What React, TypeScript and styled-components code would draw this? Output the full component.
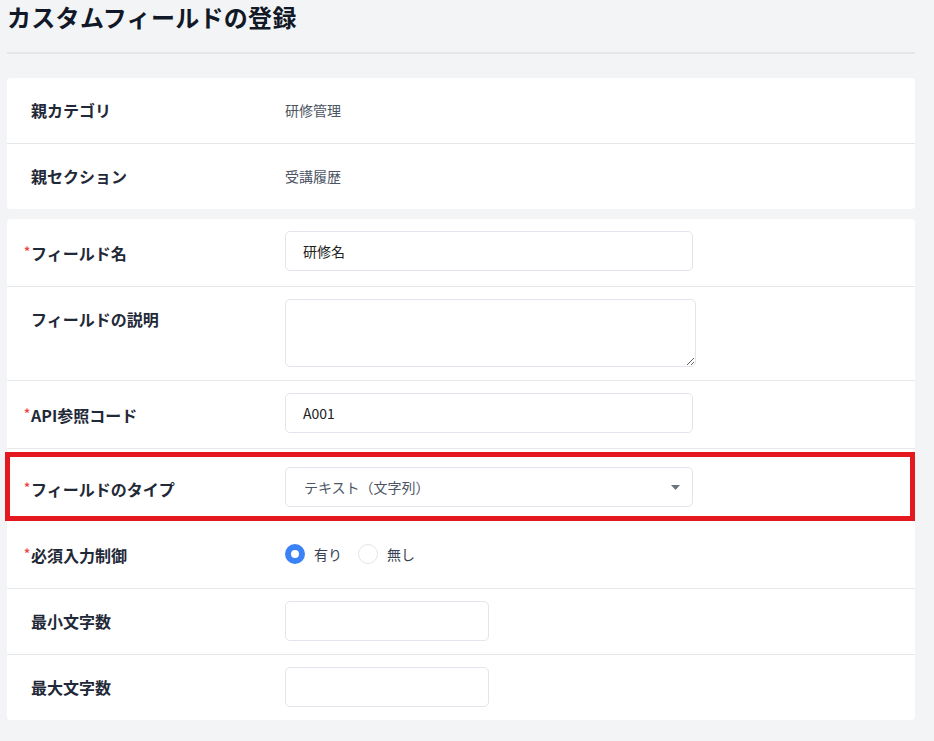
import React from "react"
import styled, { createGlobalStyle } from "styled-components"

const GlobalStyle = createGlobalStyle`
  html, body {
    margin: 0;
    padding: 0;
    background: #f3f4f6;
  }
  body {
    font-family: "Noto Sans CJK JP", "Noto Sans", sans-serif;
    color: #1f2937;
  }
`

const Page = styled.div`
  width: 908px;
  margin-left: 7px;
  padding-bottom: 20px;
`

const Title = styled.h1`
  margin: 0;
  font-size: 24px;
  letter-spacing: 0.3px;
  line-height: 34px;
  font-weight: 700;
  color: #111827;
`

const Divider = styled.hr`
  margin: 18px 0 24px;
  border: none;
  height: 2px;
  background: #e5e7eb;
`

const Card = styled.section`
  background: #fff;
  border-radius: 4px;
  margin-bottom: 10px;
`

const Row = styled.div<{ $highlight?: boolean; $last?: boolean }>`
  position: relative;
  display: flex;
  align-items: flex-start;
  padding: ${p => (p.$highlight ? "18px 0 11px" : "12px 0 13px")};
  border-bottom: ${p => (p.$last ? "none" : "1px solid #e5e7eb")};

  ${p =>
    p.$highlight &&
    `
    &::after {
      content: "";
      position: absolute;
      left: -2px;
      right: 0;
      top: 3px;
      bottom: -1px;
      border: 5px solid #e3191f;
      pointer-events: none;
    }
  `}
`

const Label = styled.div`
  flex: 0 0 254px;
  padding-left: 24px;
  font-size: 16px;
  font-weight: 700;
  line-height: 40px;
  color: #1f2937;
`

const Required = styled.span`
  display: inline-block;
  width: 7px;
  margin-left: -7px;
  color: #ef4444;
  font-size: 12px;
  vertical-align: 4px;
  font-weight: 700;
`

const Value = styled.div`
  font-size: 14px;
  line-height: 40px;
  color: #4b5563;
`

const TextInput = styled.input<{ $width?: number }>`
  box-sizing: border-box;
  width: ${p => p.$width ?? 408}px;
  height: 40px;
  padding: 0 17px;
  border: 1px solid #e2e6ec;
  border-radius: 5px;
  font-family: inherit;
  font-size: 14px;
  color: #222;
  background: #fff;
  outline: none;
`

const TextArea = styled.textarea`
  box-sizing: border-box;
  width: 411px;
  height: 68px;
  padding: 10px 17px;
  border: 1px solid #e2e6ec;
  border-radius: 5px;
  font-family: inherit;
  font-size: 14px;
  background: #fff;
  outline: none;
  display: block;
`

const SelectBox = styled.div`
  box-sizing: border-box;
  width: 408px;
  height: 40px;
  padding: 0 12px 0 18px;
  border: 1px solid #e2e6ec;
  border-radius: 5px;
  display: flex;
  align-items: center;
  justify-content: space-between;
  font-size: 14px;
  color: #4b5563;
  background: #fff;
`

const RadioGroup = styled.div`
  display: flex;
  align-items: center;
  height: 40px;
  gap: 16px;
  padding-top: 1px;
`

const RadioOption = styled.label`
  display: flex;
  align-items: center;
  gap: 9px;
  font-size: 14px;
  color: #374151;
`

const RadioDot = styled.span<{ $checked?: boolean }>`
  box-sizing: border-box;
  width: 20px;
  height: 20px;
  border-radius: 50%;
  background: #fff;
  border: ${p => (p.$checked ? "6px solid #3b82f6" : "1px solid #e2e6ec")};
`

function Caret() {
  return (
    <svg width="9" height="5" viewBox="0 0 9 5">
      <path d="M0 0 L9 0 L4.5 5 Z" fill="#6b7280" />
    </svg>
  )
}

function FieldLabel({ text, required = false }: { text: string; required?: boolean }) {
  return (
    <Label>
      {required ? <Required>*</Required> : null}
      {text}
    </Label>
  )
}

export default function App() {
  return (
    <Page>
      <GlobalStyle />
      <Title>カスタムフィールドの登録</Title>
      <Divider />

      <Card>
        <Row>
          <FieldLabel text="親カテゴリ" />
          <Value>研修管理</Value>
        </Row>
        <Row $last>
          <FieldLabel text="親セクション" />
          <Value>受講履歴</Value>
        </Row>
      </Card>

      <Card>
        <Row>
          <FieldLabel text="フィールド名" required />
          <TextInput defaultValue="研修名" />
        </Row>
        <Row>
          <FieldLabel text="フィールドの説明" />
          <TextArea />
        </Row>
        <Row>
          <FieldLabel text="API参照コード" required />
          <TextInput defaultValue="A001" />
        </Row>
        <Row $highlight>
          <FieldLabel text="フィールドのタイプ" required />
          <SelectBox>
            <span>テキスト（文字列）</span>
            <Caret />
          </SelectBox>
        </Row>
        <Row>
          <FieldLabel text="必須入力制御" required />
          <RadioGroup>
            <RadioOption>
              <RadioDot $checked />
              有り
            </RadioOption>
            <RadioOption>
              <RadioDot />
              無し
            </RadioOption>
          </RadioGroup>
        </Row>
        <Row>
          <FieldLabel text="最小文字数" />
          <TextInput $width={204} />
        </Row>
        <Row $last>
          <FieldLabel text="最大文字数" />
          <TextInput $width={204} />
        </Row>
      </Card>
    </Page>
  )
}
